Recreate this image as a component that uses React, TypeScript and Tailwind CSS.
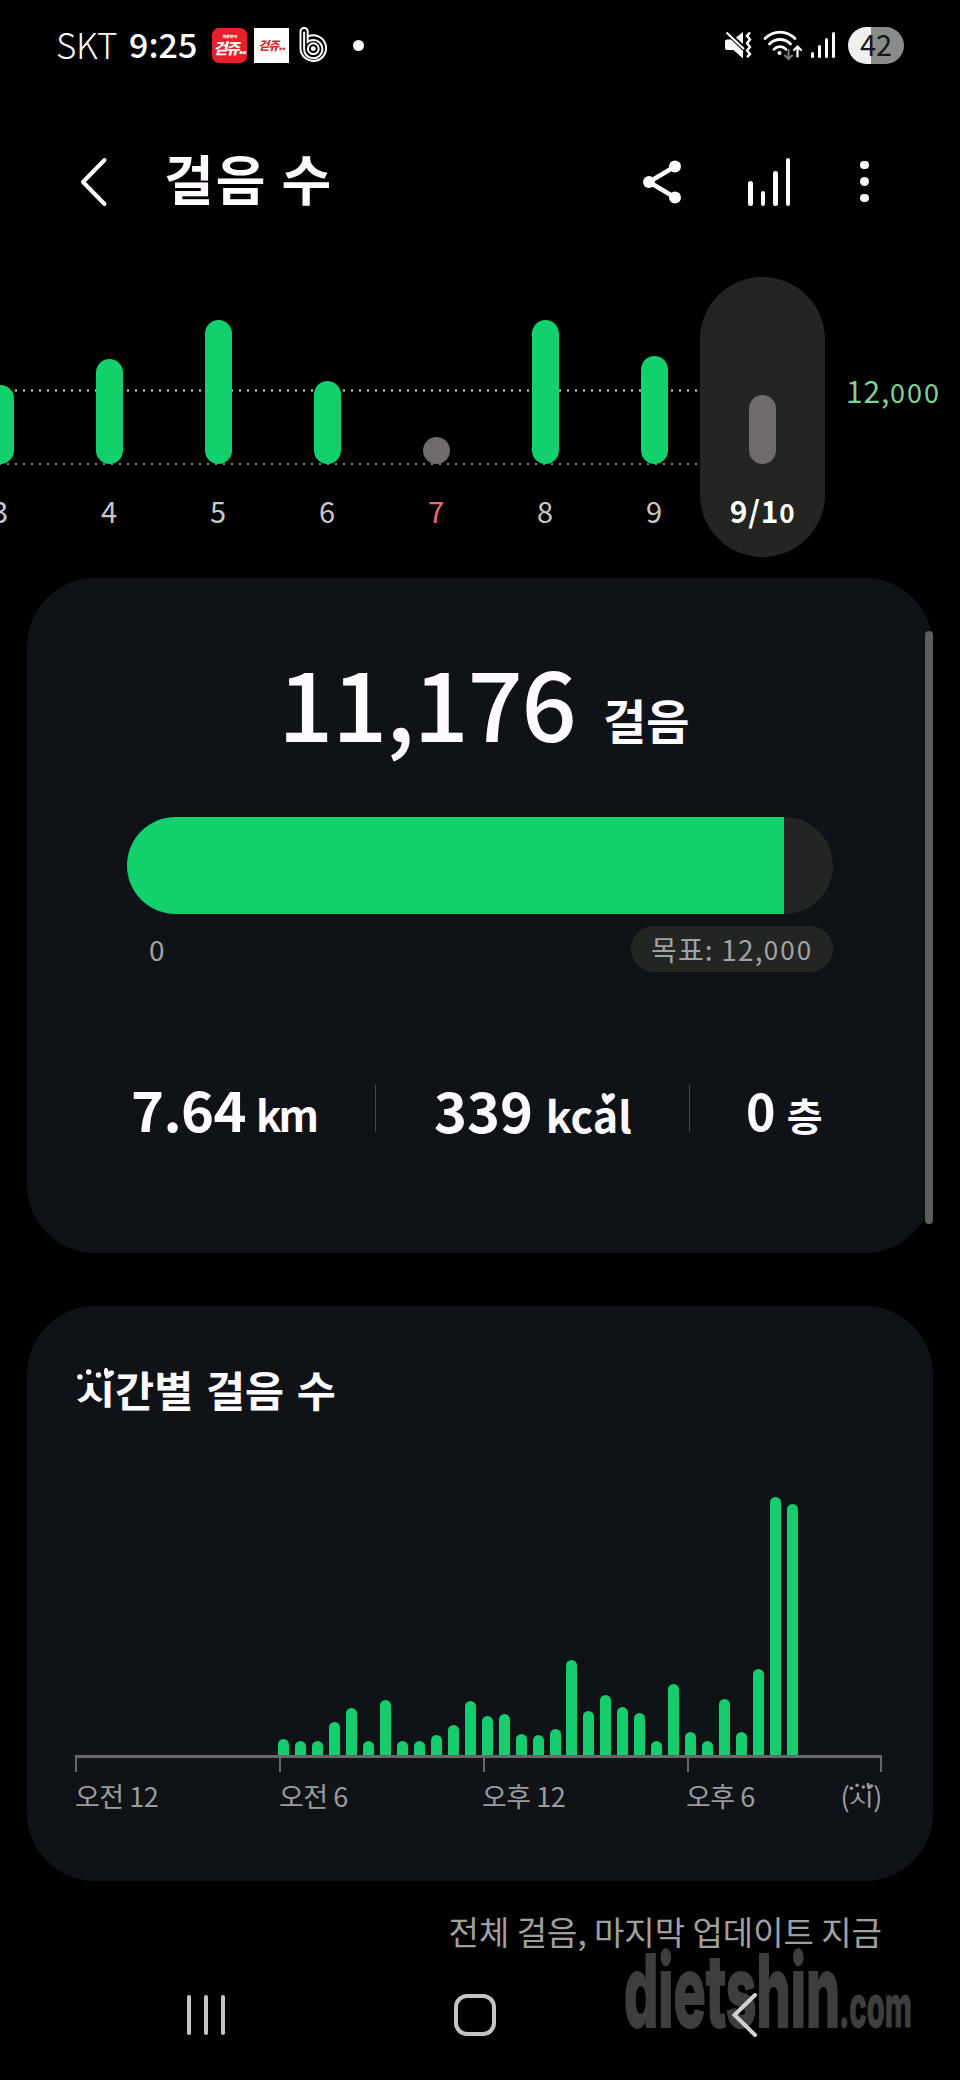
const week = [
  { label: "3", height: 79, done: true },
  { label: "4", height: 105, done: true },
  { label: "5", height: 144, done: true },
  { label: "6", height: 83, done: true },
  { label: "7", height: 27, done: false, sunday: true },
  { label: "8", height: 144, done: true },
  { label: "9", height: 108, done: true },
];

// one bar per half hour, starting at 6 in the morning
const halfHours = [
  16, 14, 14, 33, 47, 14, 55, 14, 14, 20, 30, 54, 39, 41, 21, 20, 26, 95, 44, 60, 48, 42, 14, 71, 23, 14, 56, 23, 86,
  258, 251,
];

const StatusBar = () => (
  <div className="flex h-[90px] shrink-0 items-center pl-[56px] text-white">
    <span className="w-[73px] pb-[2px] text-[35px] leading-[40px] font-light tracking-[-0.3px]">SKT</span>
    <span className="w-[83px] pb-[3px] text-[34px] leading-[40px] font-medium">9:25</span>
    <span className="mr-[7px] flex h-[35px] w-[35px] flex-col items-center justify-center rounded-[7px] bg-[#e8202c] font-black whitespace-nowrap italic">
      <span className="text-[4px] leading-[6px]">하루한끼</span>
      <span className="text-[15px] leading-[18px] tracking-[-1.5px]">걷쥬..</span>
    </span>
    <span className="mr-[10px] flex h-[35px] w-[35px] items-center justify-center bg-white text-[12px] font-black whitespace-nowrap text-[#d3302f] italic">
      <span className="tracking-[-1px]">걷쥬..</span>
    </span>
    <svg className="h-[36px] w-[29px]" viewBox="0 0 29 36" fill="none" stroke="white" strokeWidth="2">
      <path d="M1.500 21.500V4.500a3.600 3.600 0 0 1 7.200 0v5.200a12.800 12.800 0 1 1-7.200 11.800z" />
      <path d="M5.100 21.500V4.800M5.100 21.500a9.200 9.200 0 1 0 9.200-8.600c-2.200 0-4 .6-5.600 1.900V9.500" />
      <circle cx="14.300" cy="21.700" r="5.400" />
      <circle cx="14.300" cy="21.700" r="2.400" fill="white" stroke="none" />
    </svg>
    <span className="ml-[25px] h-[11px] w-[11px] rounded-full bg-white" />

    <svg className="ml-[360px] h-[28px] w-[28px]" viewBox="0 0 28 28">
      <path d="M1 10.500q0-2 2-2h4L19 20v7.500L9.500 19H3q-2 0-2-2zM12 6.500 19 1v12z" fill="white" />
      <path d="M2.500 1.500 20 18" stroke="white" strokeWidth="2.200" />
      <path d="m26 1.500-3 3.200 3 3.800-3 3.700 3 3.700-3 3.700 3 3.600-3 3" stroke="white" strokeWidth="2.400" fill="none" />
    </svg>
    <svg className="ml-[10px] h-[32px] w-[41px]" viewBox="0 0 41 32" fill="none" stroke="white" strokeWidth="2.800" strokeLinecap="round">
      <path d="M3 9.500c8.500-8.600 21.500-8.600 30 0M7.500 15c6-6 15-6 21 0M12 20.200c3.500-3.400 8.500-3.400 12 0" />
      <circle cx="17.500" cy="24" r="2" fill="white" stroke="none" />
      <path d="M26.500 21v8.500m-3.500-3 3.500 3.500 3.500-3.500" stroke="#777" strokeWidth="2.200" />
      <path d="M35.500 27.500V18m-3.500 3 3.500-3.500 3.500 3.500" strokeWidth="2.200" />
    </svg>
    <div className="ml-[8px] flex h-[26px] items-end gap-[4px]">
      <span className="h-[6px] w-[3px] rounded-full bg-white" />
      <span className="h-[13px] w-[3px] rounded-full bg-white" />
      <span className="h-[20px] w-[3px] rounded-full bg-white" />
      <span className="h-[26px] w-[3px] rounded-full bg-white" />
    </div>
    <span className="ml-[13px] flex h-[37px] w-[56px] items-center justify-center rounded-full bg-[linear-gradient(90deg,#efefef_23px,#8a8c8a_23px)] pb-1 text-[29px] leading-[36px] text-[#151515]">
      42
    </span>
  </div>
);

const Header = () => (
  <header className="flex h-[183px] shrink-0 items-center">
    <svg className="ml-[79px] h-[54px] w-[30px]" viewBox="0 0 30 54" fill="none" stroke="white" strokeWidth="4" strokeLinecap="round" strokeLinejoin="round">
      <path d="M25.500 5 4 27l21.500 22" />
    </svg>
    <h1 className="ml-[55px] w-[470px] pb-[8px] text-[54px] leading-[70px] font-bold tracking-[2px] text-[#fffaff]">걸음 수</h1>
    <svg className="ml-[7px] h-[46px] w-[42px]" viewBox="0 0 42 46" fill="#fffaff" stroke="#fffaff">
      <path d="M34 7.500 8 23l26 15.500" fill="none" strokeWidth="4.500" />
      <circle cx="34" cy="7.500" r="6" stroke="none" />
      <circle cx="8" cy="23" r="6" stroke="none" />
      <circle cx="34" cy="38.500" r="6" stroke="none" />
    </svg>
    <div className="ml-[65px] flex h-[48px] items-end gap-[8px]">
      <span className="h-[25px] w-[4.5px] rounded-full bg-[#fffaff]" />
      <span className="h-[15px] w-[4.5px] rounded-full bg-[#fffaff]" />
      <span className="h-[35px] w-[4.5px] rounded-full bg-[#fffaff]" />
      <span className="h-[48px] w-[4.5px] rounded-full bg-[#fffaff]" />
    </div>
    <div className="ml-[70px] flex flex-col gap-[8px]">
      <span className="h-[8.5px] w-[8.5px] rounded-full bg-[#fffaff]" />
      <span className="h-[8.5px] w-[8.5px] rounded-full bg-[#fffaff]" />
      <span className="h-[8.5px] w-[8.5px] rounded-full bg-[#fffaff]" />
    </div>
  </header>
);

const WeekChart = () => (
  <section className="relative h-[305px] shrink-0 overflow-hidden">
    {/* Goal line and zero line */}
    <svg className="absolute top-0 left-0 h-[305px] w-[698px]" strokeLinecap="round" strokeDasharray="0 8" strokeWidth="2.500">
      <path d="M0 117.500H698" stroke="#b4c8ba" />
      <path d="M0 191H698" stroke="#77777a" />
    </svg>
    <div className="relative flex">
      <div className="-ml-[54.5px] flex">
        {week.map((day) => (
          <div key={day.label} className="flex w-[109px] flex-col items-center">
            <div className="flex h-[191px] items-end">
              <div
                className={`w-[27px] rounded-full ${day.done ? "bg-[#12d06c]" : "bg-[#6e6a6e]"}`}
                style={{ height: day.height }}
              />
            </div>
            <span className={`mt-[30px] text-[29px] leading-[32px] ${day.sunday ? "text-[#e86a78]" : "text-[#c8c8c8]"}`}>
              {day.label}
            </span>
          </div>
        ))}
      </div>
      {/* Selected day */}
      <div className="mt-1 -ml-[8.5px] flex h-[280px] w-[125px] shrink-0 flex-col items-center rounded-full bg-[#232523]">
        <div className="flex h-[187px] items-end">
          <div className="h-[69px] w-[27px] rounded-full bg-[#6e6a6e]" />
        </div>
        <span className="mt-[29px] text-[30px] leading-[34px] font-bold tracking-[0.8px] text-white">
          9/1<span className="text-[26px]">0</span>
        </span>
      </div>
      <span className="mt-[100px] ml-[21px] text-[30px] leading-[34px] tracking-[0.8px] whitespace-nowrap text-[#7cd398]">
        12,<span className="text-[27px] tracking-[2px]">000</span>
      </span>
    </div>
  </section>
);

const Summary = () => (
  <section className="mx-[27px] flex h-[675px] shrink-0 flex-col rounded-[68px] bg-[#0f1317] px-[100px]">
    <div className="mt-[62px] flex h-[120px] items-baseline pl-[151px] text-[#fffaff]">
      <span className="w-[325px] text-[97px] leading-[120px] font-medium tracking-[-1.3px]">11,176</span>
      <span className="relative bottom-[3px] text-[47px] font-bold">걸음</span>
    </div>
    <div className="mt-[57px] flex h-[97px] overflow-hidden rounded-full bg-[#232522]">
      <div className="w-[657px] bg-[#12d06c]" />
    </div>
    <div className="mt-[12px] flex h-[46px] items-center justify-between text-[#a2a2a5]">
      <span className="pl-[22px] text-[28px] leading-[30px]">0</span>
      <span className="flex h-[46px] w-[202px] items-center justify-center rounded-full bg-[#232522] text-[28px] leading-[30px] tracking-[1.2px] whitespace-nowrap">
        목표:&nbsp;12,<span className="text-[26px] tracking-[2px]">000</span>
      </span>
    </div>
    <div className="mt-[106px] flex h-[66px] items-center font-bold whitespace-nowrap text-[#fffaff]">
      <div className="w-[248px] pl-[4px] text-[56px] leading-[66px] tracking-[-0.6px]">
        7.64 <span className="-ml-[2px] text-[42px] tracking-[-3px]">km</span>
      </div>
      <div className="mb-[6px] h-[47px] w-px bg-[#444749]" />
      <div className="w-[313px] pl-[58px] text-[56px] leading-[66px]">
        339{" "}
        <span className="text-[43px]">
          kc
          <span className="relative">
            a
            <svg className="absolute top-[9px] left-[8px] h-[13px] w-[15px]" viewBox="0 0 15 13" fill="#fffaff">
              <path d="M6 13C-1 7 0 1 3 1c2 0 3 2 3 3 2-3 7-4 8-1 1 4-4 5-8 10" />
            </svg>
          </span>
          l
        </span>
      </div>
      <div className="mb-[6px] h-[47px] w-px bg-[#444749]" />
      <div className="pl-[56px] text-[50px] leading-[66px]">
        0 <span className="text-[39px]">층</span>
      </div>
    </div>
  </section>
);

// 시 drawn smaller, with three dots and a heart on top
const Si = () => (
  <span className="relative inline-block">
    <span className="inline-block origin-[50%_72%] scale-y-[0.68]">시</span>
    <svg className="absolute top-[0.14em] left-0 h-[0.35em] w-[0.92em]" viewBox="0 0 40 15" fill="currentColor">
      <circle cx="4" cy="10" r="2.800" />
      <circle cx="13" cy="5" r="2.800" />
      <circle cx="23" cy="8" r="2.800" />
      <path d="M31 12c-3-5-3-10-1-11 3 0 3 2 3 4 2-2 5-2 6 0 1 3-4 5-8 7" />
    </svg>
  </span>
);

const Hourly = () => (
  <section className="mx-[27px] mt-[53px] flex h-[575px] shrink-0 flex-col rounded-[68px] bg-[#0f1317] pr-[51px] pl-[48px]">
    <h2 className="mt-[55px] h-[59px] pl-px text-[42.5px] leading-[56px] font-bold text-[#fffaff] [word-spacing:3px]">
      <Si />
      간별 걸음 수
    </h2>
    <div className="mt-[73px] flex h-[262px] items-end gap-[5.97px] pl-[203px]">
      {halfHours.map((height, i) => (
        <div key={i} className="w-[11px] shrink-0 rounded-t-full bg-[#15cd6c]" style={{ height }} />
      ))}
    </div>
    <div className="flex h-[17px] shrink-0 justify-between border-t-[3px] border-[#686a6a]">
      <div className="flex">
        <span className="w-[204px] border-l-2 border-[#686a6a]" />
        <span className="w-[204px] border-l-2 border-[#686a6a]" />
        <span className="w-[204px] border-l-2 border-[#686a6a]" />
        <span className="w-[100px] border-l-2 border-[#686a6a]" />
      </div>
      <span className="w-[2px] bg-[#686a6a]" />
    </div>
    <div className="mt-[6px] flex text-[27px] leading-[36px] tracking-[-0.5px] whitespace-nowrap text-[#9c9c9f]">
      <span className="w-[204px]">오전 12</span>
      <span className="w-[203px]">오전 6</span>
      <span className="w-[204px]">오후 12</span>
      <span>오후 6</span>
      <span className="ml-auto">
        (<Si />)
      </span>
    </div>
  </section>
);

const Footer = () => (
  <footer className="flex flex-col">
    <p className="mt-[28px] pr-[78px] text-right text-[33px] leading-[44px] text-[#a0a0a0]">
      전체 걸음, 마지막 업데이트 지금
    </p>
    <nav className="mt-[41px] flex h-[42px] items-center">
      <div className="ml-[187px] flex h-[40px] gap-[13px]">
        <span className="w-[4px] rounded-full bg-[#c4c4c4]" />
        <span className="w-[4px] rounded-full bg-[#c4c4c4]" />
        <span className="w-[4px] rounded-full bg-[#c4c4c4]" />
      </div>
      <div className="ml-[229px] h-[42px] w-[42px] rounded-[13px] border-[4px] border-[#c4c4c4]" />
      <svg className="relative z-10 ml-[235px] h-[46px] w-[28px]" viewBox="0 0 28 46" fill="none" stroke="#d0d0d0" strokeWidth="4" strokeLinecap="round">
        <path d="M24 3 3.500 23 24 43" />
      </svg>
    </nav>
  </footer>
);

const Watermark = () => (
  <svg
    className="absolute top-[1930px] left-[620px] h-[120px] w-[310px]"
    fill="#3e3e3e"
    stroke="#3e3e3e"
    fontFamily="Inter, sans-serif"
    fontWeight="800"
  >
    <text x="4" y="97" fontSize="100" strokeWidth="2" textLength="216" lengthAdjust="spacingAndGlyphs">dietshin</text>
    <text x="219" y="97" fontSize="57" strokeWidth="1" textLength="73" lengthAdjust="spacingAndGlyphs">.com</text>
  </svg>
);

export default function App() {
  return (
    <div className="relative flex h-[2080px] w-[960px] flex-col overflow-hidden bg-black font-['Noto_Sans_CJK_KR',sans-serif]">
      <StatusBar />
      <Header />
      <WeekChart />
      <Summary />
      <Hourly />
      <Footer />
      <Watermark />
      {/* Scrollbar */}
      <div className="absolute top-[631px] left-[925px] h-[593px] w-[8px] rounded-full bg-[#5c5d5e]" />
    </div>
  );
}
